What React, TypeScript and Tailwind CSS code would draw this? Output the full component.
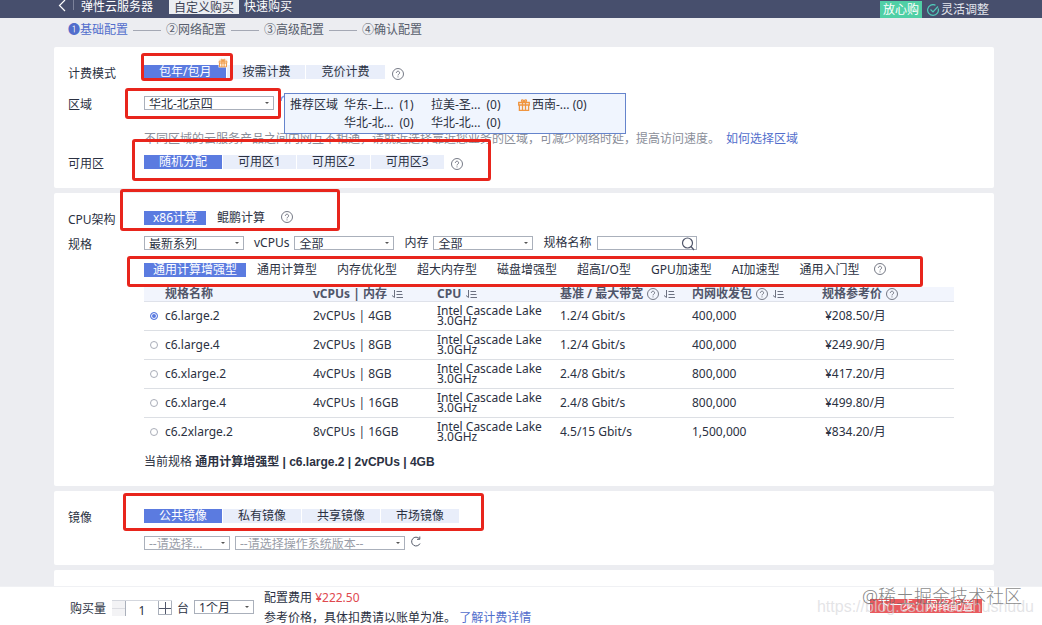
import { useState, type ReactNode } from 'react'
import clsx from 'clsx'

const FLAVORS = [
  { name: 'c6.large.2', spec: '2vCPUs | 4GB', bandwidth: '1.2/4 Gbit/s', pps: '400,000', price: '¥208.50/月' },
  { name: 'c6.large.4', spec: '2vCPUs | 8GB', bandwidth: '1.2/4 Gbit/s', pps: '400,000', price: '¥249.90/月' },
  { name: 'c6.xlarge.2', spec: '4vCPUs | 8GB', bandwidth: '2.4/8 Gbit/s', pps: '800,000', price: '¥417.20/月' },
  { name: 'c6.xlarge.4', spec: '4vCPUs | 16GB', bandwidth: '2.4/8 Gbit/s', pps: '800,000', price: '¥499.80/月' },
  { name: 'c6.2xlarge.2', spec: '8vCPUs | 16GB', bandwidth: '4.5/15 Gbit/s', pps: '1,500,000', price: '¥834.20/月' },
]

const FLAVOR_TYPES = ['通用计算增强型', '通用计算型', '内存优化型', '超大内存型', '磁盘增强型', '超高I/O型', 'GPU加速型', 'AI加速型', '通用入门型']
const STEPS = ['❶基础配置', '②网络配置', '③高级配置', '④确认配置']

function HelpIcon({ className }: { className?: string }) {
  return (
    <svg viewBox="0 0 12 12" className={clsx('size-3 shrink-0', className)} fill="none" stroke="#666b78" strokeWidth="0.9">
      <circle cx="6" cy="6" r="5.5" />
      <path d="M4.4 4.9a1.6 1.6 0 1 1 2.5 1.2c-.6.4-.9.6-.9 1.3" />
      <path d="M6 8.4v1" />
    </svg>
  )
}

function SortIcon() {
  return (
    <svg viewBox="0 0 12 10" className="h-[10px] w-3 shrink-0" fill="none" stroke="#6b7080" strokeWidth="1">
      <path d="M3.5 1v7.5M3.5 8.5L1 6.5M5.5 2.5H11M5.5 5.5H11.500M5.5 8.5H12" />
    </svg>
  )
}

function GiftIcon() {
  return (
    <svg viewBox="0 0 12 12" className="size-3 shrink-0" fill="none" stroke="#f0953f" strokeWidth="1.3">
      <path d="M.7 3.5h10.600v2.500H.7zM1.400 6v5.300h9.200V6M4.500 3.500v7.800M7.500 3.500v7.800" />
      <path d="M6 3.300C4.500 3.200 3.200 2.400 3.600 1.200 4.300.2 5.700 1.200 6 3.200 6.300 1.200 7.700.2 8.400 1.200 8.800 2.400 7.500 3.200 6 3.300z" />
    </svg>
  )
}

// red frame drawn on top of a group of controls
function Frame({ className }: { className: string }) {
  return <span aria-hidden className={clsx('pointer-events-none absolute z-20 rounded-[3px] border-[3px] border-[#e8251c]', className)} />
}

function Card({ children, className }: { children?: ReactNode; className?: string }) {
  return <section className={clsx('shrink-0 rounded-xs bg-white pl-[14px] pt-[18px]', className)}>{children}</section>
}

function Row({ label, children, className }: { label?: string; children: ReactNode; className?: string }) {
  return (
    <div className={clsx('flex h-[18px] items-start', className)}>
      <span className="w-[76px] shrink-0 leading-[18px]">{label}</span>
      {children}
    </div>
  )
}

function Tabs({ items, plain }: { items: string[]; plain?: boolean }) {
  const [active, setActive] = useState(0)
  return (
    <div className={clsx('flex', plain ? 'gap-[2px]' : 'gap-px')}>
      {items.map((item, i) => (
        <button
          key={item}
          type="button"
          onClick={() => setActive(i)}
          className={clsx(
            'h-[14px] whitespace-nowrap leading-[14px]',
            plain ? 'px-[9px]' : 'px-[15px]',
            i === active ? 'bg-[#5b7be0] text-white' : !plain && 'bg-[#e9eefa]',
          )}
        >
          {item}
        </button>
      ))}
    </div>
  )
}

function Select({ label, options, className }: { label: string; options: string[]; className: string }) {
  return (
    <div className={clsx('relative h-[14px]', className)}>
      <select aria-label={label} className="block h-full w-full appearance-none truncate border border-[#aab0bb] bg-white pl-1 pr-4 pt-px leading-[12px]">
        {options.map((o) => (
          <option key={o}>{o}</option>
        ))}
      </select>
      <span className="pointer-events-none absolute right-[5px] top-[6px] border-x-2 border-t-2 border-x-transparent border-t-[#555]" />
    </div>
  )
}

function FlavorTable() {
  const [selected, setSelected] = useState('c6.large.2')
  return (
    <table className="w-full table-fixed border-collapse text-left">
      <colgroup>
        <col className="w-[169px]" />
        <col className="w-[124px]" />
        <col className="w-[123px]" />
        <col className="w-[132px]" />
        <col className="w-[130px]" />
        <col />
      </colgroup>
      <thead className="bg-[#f2f5fd] text-[#50566a]">
        <tr className="h-[14px] border-b border-[#dfe2ea] leading-[13px]">
          <th className="pl-[21px]">规格名称</th>
          <th><span className="flex items-center gap-1">vCPUs | 内存 <SortIcon /></span></th>
          <th><span className="flex items-center gap-1">CPU <SortIcon /></span></th>
          <th><span className="flex items-center gap-1 whitespace-nowrap">基准 / 最大带宽 <HelpIcon /> <SortIcon /></span></th>
          <th><span className="flex items-center gap-1 whitespace-nowrap">内网收发包 <HelpIcon /> <SortIcon /></span></th>
          <th><span className="flex items-center gap-1 whitespace-nowrap">规格参考价 <HelpIcon /></span></th>
        </tr>
      </thead>
      <tbody>
        {FLAVORS.map((f) => (
          <tr key={f.name} className="h-[29px] border-b border-[#dcdfe4] last:border-b-0">
            <td className="pl-[6px]">
              <label className="flex items-center gap-[7px]">
                <input
                  type="radio"
                  name="flavor"
                  checked={selected === f.name}
                  onChange={() => setSelected(f.name)}
                  className="size-2 appearance-none rounded-full border border-[#a9adb8] bg-white checked:border-[#5b7be0] checked:bg-[#5b7be0] checked:ring-1 checked:ring-inset checked:ring-white"
                />
                {f.name}
              </label>
            </td>
            <td>{f.spec}</td>
            <td className="leading-[10px]">Intel Cascade Lake 3.0GHz</td>
            <td>{f.bandwidth}</td>
            <td>{f.pps}</td>
            <td className="pl-[3px]">{f.price}</td>
          </tr>
        ))}
      </tbody>
    </table>
  )
}

export default function App() {
  const [count, setCount] = useState(1)

  return (
    <div className="flex h-screen flex-col overflow-hidden bg-[#ecedf1] font-['Noto_Sans','Noto_Sans_CJK_SC',sans-serif] text-xs text-[#2b3142]">
      <header className="flex h-[18px] shrink-0 items-start bg-[#474f6d] pl-[58px] pr-[53px] leading-[13px] text-white">
        <button type="button" aria-label="返回" className="mr-[7px]">
          <svg viewBox="0 0 8 12" className="h-3 w-2" fill="none" stroke="#fff" strokeWidth="1.2"><path d="M7 0L1.500 5.500L7 11" /></svg>
        </button>
        <span className="h-[10px] w-px bg-[#7c829a]" />
        <h1 className="ml-[7px]">弹性云服务器</h1>
        <button type="button" className="ml-4 h-[14px] bg-[#eceef2] px-[5px] leading-[13px] text-[#3c4254]">自定义购买</button>
        <button type="button" className="ml-[5px] leading-[13px]">快速购买</button>
        <div className="ml-auto flex items-center pt-px leading-[17px]">
          <span className="bg-[#50cfa5] px-[3px]">放心购</span>
          <svg viewBox="0 0 12 12" className="ml-[5px] mr-[2px] size-3" fill="none" stroke="#50c8b8" strokeWidth="1.2">
            <path d="M11.200 4.500A5.400 5.400 0 1 1 8.500 1.200M3.500 5.500L6 8L11 2.500" />
          </svg>
          <span className="text-[#e4e6ee]">灵活调整</span>
        </div>
      </header>

      <nav className="flex h-[29px] shrink-0 items-start gap-[5px] pl-[68px] pt-1 leading-4">
        {STEPS.map((s, i) => (
          <div key={s} className="flex items-center gap-[5px]">
            {i > 0 && <span className="h-px w-[28px] bg-[#a4a8b4]" />}
            <span className={i === 0 ? 'text-[#526ecc]' : 'text-[#575d6c]'}>{s}</span>
          </div>
        ))}
      </nav>

      <main className="flex min-h-0 flex-1 flex-col gap-[5px] overflow-hidden pl-[54px] pr-[48px]">
        <Card className="pb-[15px]">
          <Row label="计费模式">
            <div className="relative">
              <Tabs items={['包年/包月', '按需计费', '竞价计费']} />
              <span className="absolute left-[73px] top-[-8px] scale-75 bg-[#fff6ea]"><GiftIcon /></span>
              <Frame className="left-[-3px] top-[-12px] h-[28px] w-[92px]" />
            </div>
            <HelpIcon className="ml-[7px] mt-[3px]" />
          </Row>
          <Row label="区域" className="mt-[13px]">
            <div className="relative">
              <Select label="区域" options={['华北-北京四']} className="w-[130px]" />
              <Frame className="left-[-19px] top-[-8px] h-[31px] w-[156px]" />
            </div>
            <div className="relative">
              <svg viewBox="0 0 6 6" className="absolute left-[6px] top-[-1px] size-[6px]" fill="none" stroke="#7f9ae6" strokeWidth="1.6">
                <path d="M1 6C1 3 2.500 1 6 1" />
              </svg>
              <div className="absolute left-[10px] top-[-3px] z-10 flex h-[41px] w-[342px] border border-[#6584cc] bg-[#f0f5fe] pl-[5px] pt-[2px] leading-[18px]">
                <span className="w-[54px]">推荐区域</span>
                <div className="w-[87px]">
                  <p className="flex gap-[6px]"><span>华东-上...</span><span>(1)</span></p>
                  <p className="flex gap-[6px]"><span>华北-北...</span><span>(0)</span></p>
                </div>
                <div className="w-[87px]">
                  <p className="flex gap-[6px]"><span>拉美-圣...</span><span>(0)</span></p>
                  <p className="flex gap-[6px]"><span>华北-北...</span><span>(0)</span></p>
                </div>
                <p className="flex h-[18px] items-center gap-[2px]"><GiftIcon /><span>西南-... (0)</span></p>
              </div>
            </div>
          </Row>
          <p className="ml-[76px] mt-[17px] flex gap-[6px] leading-4 text-[#8a8e99]">
            不同区域的云服务产品之间内网互不相通，请就近选择靠近您业务的区域，可减少网络时延，提高访问速度。
            <a href="#region" className="text-[#526ecc]">如何选择区域</a>
          </p>
          <Row label="可用区" className="mt-2">
            <div className="relative flex">
              <Tabs items={['随机分配', '可用区1', '可用区2', '可用区3']} />
              <HelpIcon className="ml-[7px] mt-[3px]" />
              <Frame className="left-[-12px] top-[-16px] h-[42px] w-[359px]" />
            </div>
          </Row>
        </Card>

        <Card className="pb-[15px]">
          <Row label="CPU架构">
            <div className="relative flex">
              <Tabs items={['x86计算', '鲲鹏计算']} plain />
              <HelpIcon className="ml-[7px]" />
              <Frame className="left-[-24px] top-[-22px] h-[42px] w-[220px]" />
            </div>
          </Row>
          <Row label="规格" className="mt-[7px]">
            <div className="flex leading-[14px]">
              <Select label="系列" options={['最新系列']} className="mr-[10px] w-[100px]" />
              <span className="mr-[5px]">vCPUs</span>
              <Select label="vCPUs" options={['全部']} className="mr-[10px] w-[100px]" />
              <span className="mr-[5px]">内存</span>
              <Select label="内存" options={['全部']} className="mr-[10px] w-[100px]" />
              <label htmlFor="flavor-name" className="mr-[5px]">规格名称</label>
              <div className="relative">
                <input id="flavor-name" className="block h-[14px] w-[100px] border border-[#aab0bb] bg-white pl-1 pr-4" />
                <svg viewBox="0 0 14 14" className="absolute right-[2px] top-[1px] size-[14px]" fill="none" stroke="#50566a" strokeWidth="1.2">
                  <circle cx="6.500" cy="6" r="5" /><path d="M10 9.500L13 13" />
                </svg>
              </div>
            </div>
          </Row>
          <div className="ml-[76px] mr-10">
            <div className="relative mt-[9px] flex">
              <Tabs items={FLAVOR_TYPES} plain />
              <HelpIcon className="ml-[5px]" />
              <Frame className="left-[-17px] top-[-7px] h-[31px] w-[796px]" />
            </div>
            <div className="mt-[10px]">
              <FlavorTable />
            </div>
            <p className="mt-[7px] leading-[18px]">
              当前规格 <strong className="font-['Liberation_Sans','Noto_Sans_CJK_SC',sans-serif]">通用计算增强型 | c6.large.2 | 2vCPUs | 4GB</strong>
            </p>
          </div>
        </Card>

        <Card className="pb-[15px]">
          <Row label="镜像">
            <div className="relative">
              <Tabs items={['公共镜像', '私有镜像', '共享镜像', '市场镜像']} />
              <Frame className="left-[-21px] top-[-16px] h-[38px] w-[361px]" />
            </div>
          </Row>
          <div className="ml-[76px] mt-[9px] flex gap-[5px] text-[#9a9ea8]">
            <Select label="操作系统" options={['--请选择...']} className="w-[86px]" />
            <Select label="操作系统版本" options={['--请选择操作系统版本--']} className="w-[170px]" />
            <button type="button" aria-label="刷新" className="size-3">
              <svg viewBox="0 0 12 12" className="size-3" fill="none" stroke="#555b6a" strokeWidth="1">
                <path d="M10 7.500A4.400 4.400 0 1 1 9.300 2.600M9.800.5V3.300H7" />
              </svg>
            </button>
          </div>
        </Card>

        <Card className="h-10" />
      </main>

      <footer className="relative flex h-[39px] shrink-0 items-start border-t border-[#f0f1f4] bg-white pl-[70px]">
        <span className="mt-[13px] leading-[18px]">购买量</span>
        <div className="ml-[6px] mt-[13px] flex h-4 border-t border-[#d4d7de]">
          <button type="button" aria-label="减少" onClick={() => setCount(Math.max(1, count - 1))} className="flex w-[14px] items-center border-r border-[#aab0bb] bg-[#f3f3f5]">
            <span className="h-px w-full bg-[#dcdde2]" />
          </button>
          <input aria-label="购买量" value={count} onChange={(e) => setCount(Number(e.target.value) || 1)} className="w-[32px] pt-1 text-center" />
          <button type="button" aria-label="增加" onClick={() => setCount(count + 1)} className="flex h-[14px] w-[14px] items-center border-x border-b border-[#aab0bb]">
            <svg viewBox="0 0 12 12" className="size-3" stroke="#50566a"><path d="M0 6.500H12M6.500 0V12" /></svg>
          </button>
        </div>
        <span className="ml-[5px] mt-[13px] leading-[18px]">台</span>
        <Select label="购买时长" options={['1个月']} className="ml-[5px] mt-[13px] w-[60px]" />
        <div className="ml-[10px] mt-px leading-5">
          <p>配置费用 <span className="text-[#e0484f]">¥222.50</span></p>
          <p>参考价格，具体扣费请以账单为准。 <a href="#price" className="text-[#526ecc]">了解计费详情</a></p>
        </div>
        <button type="button" className="ml-auto mr-[60px] mt-[12px] h-[14px] w-[112px] bg-[#e95a5e] leading-[14px] text-white">下一步：网络配置</button>
        <span className="pointer-events-none absolute right-[8px] top-[10px] font-['Liberation_Sans',sans-serif] text-[16px] leading-5 text-[#d8d8dc]/70">https://blog.csdn.net/zhushudu</span>
        <span className="pointer-events-none absolute right-[20px] top-[-3px] text-[18px] font-light leading-6 text-[#666]/80">@稀土掘金技术社区</span>
      </footer>
    </div>
  )
}
